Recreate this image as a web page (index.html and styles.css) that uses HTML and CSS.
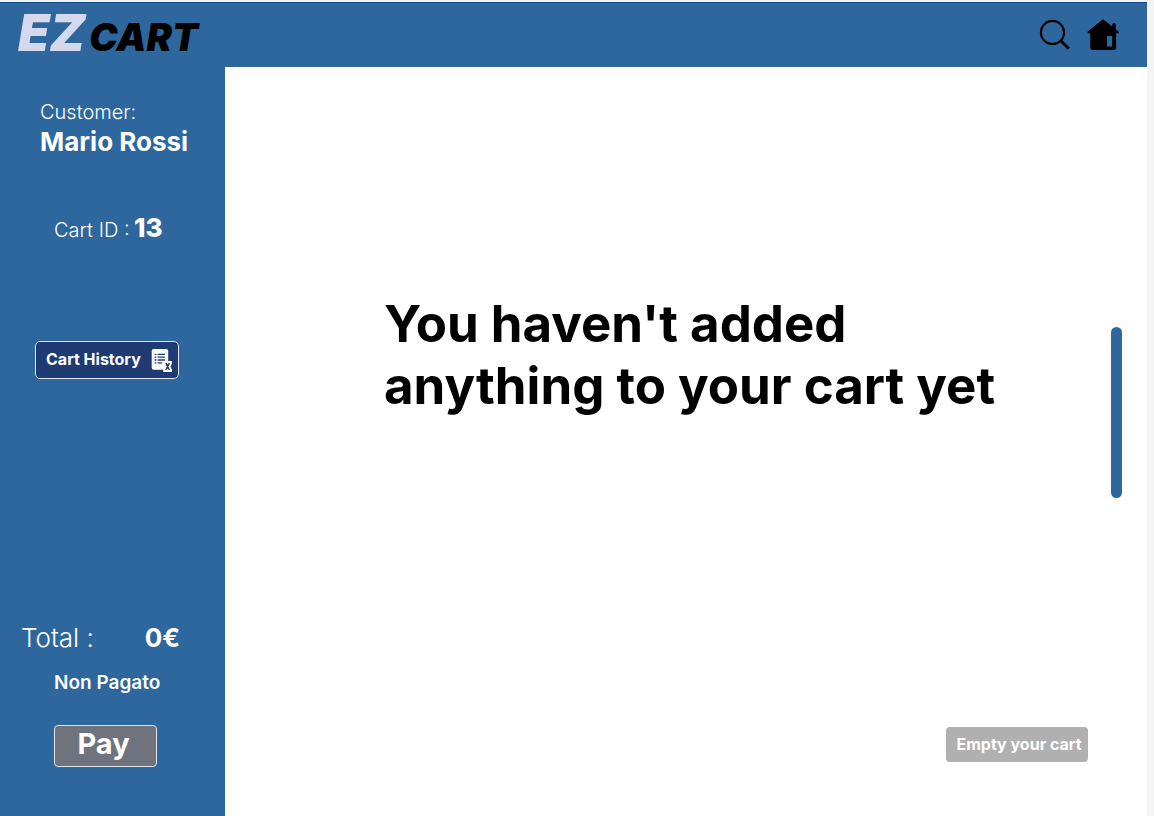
FILE: index.html
```
<!DOCTYPE html>
<html lang="en">
<head>
<meta charset="utf-8">
<meta name="viewport" content="width=device-width, initial-scale=1">
<title>EZ Cart</title>
<link rel="stylesheet" href="styles.css">
</head>
<body>
<div class="app">
  <header class="topbar">
    <div class="logo"><span class="logo-ez">EZ</span><span class="logo-cart">CART</span></div>
    <nav class="actions" aria-label="Main">
      <button class="icon-button" type="button" aria-label="Search">
        <svg width="32" height="32" viewBox="0 0 32 32" fill="none" stroke="#000">
          <circle cx="13.5" cy="13.5" r="11.6" stroke-width="2.1"/>
          <path d="M21.3 21.3L29.8 29.8" stroke-width="2.8"/>
        </svg>
      </button>
      <a class="icon-button" href="#" aria-label="Home">
        <svg width="32" height="32" viewBox="0 0 32 32">
          <path fill-rule="evenodd" d="M16 0.2L25.3 7.6V5.2Q25.3 4.3 26.2 4.3H27.8Q28.7 4.3 28.7 5.2V10.2L31.7 12.6V14.3H29.1V28.8Q29.1 31 26.9 31H5.7Q3.3 31 3.3 28.8V14.3H0.7V12.6ZM20 17V27.5H25.2V17Z"/>
        </svg>
      </a>
    </nav>
  </header>
  <div class="body">
    <aside class="sidebar">
      <div class="customer">
        <p class="label">Customer:</p>
        <p class="value">Mario Rossi</p>
      </div>
      <p class="cart-id"><span class="label">Cart ID :</span> <strong class="cart-number">13</strong></p>
      <button class="history" type="button">Cart History
        <svg width="22" height="24" viewBox="0 0 22 24">
          <rect x="1.7" y="1" width="16.5" height="20.7" rx="2" fill="#fff"/>
          <path d="M4.6 6.4h1.8M7.6 6.4h7.4M4.6 9.2h1.8M7.6 9.2h7.4M4.6 12h1.8M7.6 12h7.4M4.6 14.8h1.8M7.6 14.8h4.6" stroke="#203a74" stroke-width="1.3"/>
          <path d="M13.2 13H22V15.2L20.5 18.5L22 21.8V24H13.2V21.8L14.7 18.5L13.2 15.2Z" fill="#fff"/>
          <path d="M15.1 15H20.1L18.4 18.5L20.1 22H15.1L16.8 18.5Z" fill="#203a74"/>
          <path d="M16.4 22L17.6 20.4L18.8 22ZM16.6 15H18.6L17.6 16.2Z" fill="#fff"/>
        </svg>
      </button>
      <div class="checkout">
        <p class="total"><span>Total :</span><strong>0€</strong></p>
        <p class="status">Non Pagato</p>
        <button class="pay" type="button">Pay</button>
      </div>
    </aside>
    <main class="content">
      <div class="cart">
        <h1 class="message">You haven't added anything to your cart yet</h1>
        <button class="empty" type="button">Empty your cart</button>
      </div>
      <div class="scroll-thumb"></div>
    </main>
  </div>
</div>
</body>
</html>
```
FILE: styles.css
```
* {
  box-sizing: border-box;
}

body {
  margin: 0;
  background: #f4f4f4;
  color: #fff;
  font-family: Inter, "Liberation Sans", sans-serif;
}

p,
h1 {
  margin: 0;
}

button {
  font-family: inherit;
  color: inherit;
  cursor: pointer;
}

.app {
  display: flex;
  flex-direction: column;
  min-height: 100vh;
  padding: 2px 7px 0 0;
}

.topbar {
  display: flex;
  align-items: center;
  justify-content: space-between;
  height: 65px;
  padding: 0 28px 0 18px;
  background: #2d679d;
  border-top: 1px solid #0c4a8c;
}

.logo {
  display: flex;
  align-items: baseline;
  gap: 4px;
  font-style: italic;
  font-weight: 900;
  line-height: 64px;
}

.logo-ez {
  color: #d5d9ee;
  font-size: 51px;
}

.logo-cart {
  color: #000;
  font-size: 38px;
}

.actions {
  display: flex;
  gap: 16px;
}

.icon-button {
  display: flex;
  padding: 0;
  background: none;
  border: 0;
}

.body {
  display: flex;
  flex: 1;
}

.sidebar {
  display: flex;
  flex-direction: column;
  width: 225px;
  padding: 33px 0 49px;
  background: #2d679d;
}

.customer {
  padding-left: 40px;
}

.label {
  font-size: 20px;
  font-weight: 300;
  line-height: 24px;
}

.value {
  margin-top: 2px;
  font-size: 26px;
  font-weight: 700;
  line-height: 32px;
}

.cart-id {
  margin-top: 54px;
  padding-left: 54px;
  line-height: 32px;
}

.cart-number {
  font-size: 26px;
  font-weight: 800;
}

.history {
  display: flex;
  align-items: center;
  justify-content: space-between;
  width: 144px;
  height: 38px;
  margin: 94px 0 0 35px;
  padding: 0 6px 2px 10px;
  background: #203a74;
  border: 1px solid #dfe6f2;
  border-radius: 5px;
  font-size: 16px;
  font-weight: 700;
}

.history svg {
  margin-top: 2px;
}

.checkout {
  margin-top: auto;
}

.total {
  display: flex;
  justify-content: space-between;
  padding: 0 45px 0 21px;
  font-size: 26px;
  font-weight: 300;
  line-height: 32px;
}

.total strong {
  font-weight: 700;
}

.status {
  margin-top: 16px;
  padding-left: 54px;
  font-size: 19px;
  font-weight: 600;
  line-height: 26px;
}

.pay {
  width: 103px;
  height: 42px;
  margin: 29px 0 0 54px;
  padding: 0 4px 4px 0;
  background: #6e737d;
  border: 1px solid #e4e6ea;
  border-radius: 4px;
  font-size: 29px;
  font-weight: 700;
  line-height: 36px;
}

.content {
  display: flex;
  flex: 1;
  gap: 23px;
  align-items: center;
  padding-right: 25px;
  background: #fff;
  color: #000;
}

.cart {
  display: flex;
  flex: 1;
  flex-direction: column;
  align-self: stretch;
  justify-content: space-between;
  padding: 226px 0 54px 159px;
}

.message {
  max-width: 640px;
  font-size: 51px;
  font-weight: 700;
  line-height: 62px;
}

.empty {
  align-self: flex-end;
  width: 142px;
  height: 35px;
  padding: 0 0 2px 4px;
  background: #b0b0b0;
  border: 0;
  border-radius: 4px;
  color: #fff;
  font-size: 16px;
  font-weight: 700;
}

.scroll-thumb {
  width: 11px;
  height: 171px;
  margin-bottom: 58px;
  background: #2d679d;
  border-radius: 6px;
}
```
